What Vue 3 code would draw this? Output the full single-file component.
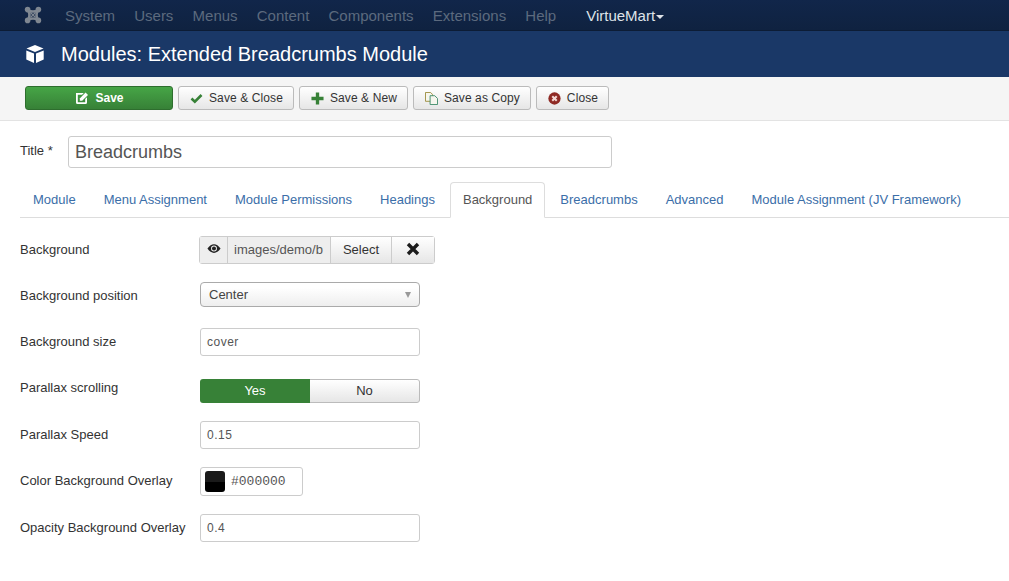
<script setup>
const navItems = ['System', 'Users', 'Menus', 'Content', 'Components', 'Extensions', 'Help']
const tabs = ['Module', 'Menu Assignment', 'Module Permissions', 'Headings', 'Background', 'Breadcrumbs', 'Advanced', 'Module Assignment (JV Framework)']
</script>

<template>
  <div class="page">
    <nav class="navbar">
      <svg class="logo" viewBox="0 0 18 18" width="18" height="18">
        <g fill="#7f8791">
          <circle cx="3.6" cy="3.6" r="2.8" />
          <circle cx="14.4" cy="3.6" r="2.8" />
          <circle cx="3.6" cy="14.4" r="2.8" />
          <circle cx="14.4" cy="14.4" r="2.8" />
        </g>
        <path fill="none" stroke="#7f8791" stroke-width="2.6" d="M4 4 Q9 7 14 4 Q11 9 14 14 Q9 11 4 14 Q7 9 4 4 Z" />
        <path fill="none" stroke="#7f8791" stroke-width="1.3" d="M6.5 6.5 L11.5 11.5 M11.5 6.5 L6.5 11.5" />
      </svg>
      <a v-for="item in navItems" :key="item" class="nav-link">{{ item }}</a>
      <a class="nav-link active">VirtueMart<span class="caret"></span></a>
    </nav>

    <header class="title-bar">
      <svg class="cube" viewBox="0 0 20 20" width="20" height="20">
        <path fill="#fff" d="M10 1 L18.5 4.6 L10 8 L1.5 4.6 Z" />
        <path fill="#fff" d="M1.3 6.4 L9 9.6 L9 19 L1.3 15.4 Z" />
        <path fill="#fff" d="M18.7 6.4 L11 9.6 L11 19 L18.7 15.4 Z" />
      </svg>
      <h1>Modules: Extended Breadcrumbs Module</h1>
    </header>

    <div class="toolbar">
      <button class="btn btn-save">
        <svg viewBox="0 0 14 14" width="14" height="14">
          <path fill="#fff" d="M1 2 H8.8 L7 3.8 H2.8 V11.2 H10.2 V8 L12 6.2 V11.5 Q12 13 10.5 13 H2.5 Q1 13 1 11.5 Z" />
          <path fill="#fff" d="M4.8 7.4 L10.6 1.6 L13 4 L7.2 9.8 H4.8 Z" />
        </svg>
        Save
      </button>
      <button class="btn">
        <svg viewBox="0 0 14 14" width="13" height="13">
          <path fill="none" stroke="#378137" stroke-width="2.8" d="M1.6 7 L5.2 10.4 L12.4 3.2" />
        </svg>
        Save &amp; Close
      </button>
      <button class="btn">
        <svg viewBox="0 0 14 14" width="13" height="13">
          <path fill="#378137" d="M5.2 0.5 H8.8 V5.2 H13.5 V8.8 H8.8 V13.5 H5.2 V8.8 H0.5 V5.2 H5.2 Z" />
        </svg>
        Save &amp; New
      </button>
      <button class="btn">
        <svg viewBox="0 0 14 14" width="13" height="13">
          <path fill="#f6f6ee" stroke="#9a8a3a" d="M0.5 0.5 H6 L8 2.5 V10 H0.5 Z" />
          <path fill="#f6f6ee" stroke="#3f8a6a" d="M5.5 4 H10.5 L13.5 7 V13.5 H5.5 Z" />
        </svg>
        Save as Copy
      </button>
      <button class="btn">
        <svg viewBox="0 0 14 14" width="13" height="13">
          <circle cx="7" cy="7" r="6.6" fill="#8f2a24" />
          <path stroke="#f4d9d6" stroke-width="2.2" d="M4.6 4.6 L9.4 9.4 M9.4 4.6 L4.6 9.4" />
        </svg>
        Close
      </button>
    </div>

    <main class="content">
      <div class="title-row">
        <label>Title *</label>
        <div class="title-input">Breadcrumbs</div>
      </div>

      <ul class="tabs">
        <li v-for="tab in tabs" :key="tab" :class="{ active: tab === 'Background' }">{{ tab }}</li>
      </ul>

      <div class="form">
        <div class="row">
          <label>Background</label>
          <div class="media">
            <span class="preview">
              <svg viewBox="0 0 16 12" width="14" height="11">
                <path fill="#222" fill-rule="evenodd" d="M0.5 6 Q4 1 8 1 Q12 1 15.5 6 Q12 11 8 11 Q4 11 0.5 6 Z M8 2.6 A3.4 3.4 0 1 0 8 9.4 A3.4 3.4 0 1 0 8 2.6 Z" />
                <circle cx="8" cy="6" r="2.3" fill="#222" />
              </svg>
            </span>
            <span class="path">images/demo/b</span>
            <span class="select-btn">Select</span>
            <span class="clear-btn">
              <svg viewBox="0 0 14 14" width="14" height="14">
                <path stroke="#1c1c1c" stroke-width="3.4" d="M2 2 L12 12 M12 2 L2 12" />
              </svg>
            </span>
          </div>
        </div>

        <div class="row">
          <label>Background position</label>
          <div class="dropdown">Center<span class="arrow"></span></div>
        </div>

        <div class="row row-size">
          <label>Background size</label>
          <div class="input">cover</div>
        </div>

        <div class="row row-switch">
          <label>Parallax scrolling</label>
          <div class="switch">
            <span class="yes">Yes</span>
            <span class="no">No</span>
          </div>
        </div>

        <div class="row">
          <label>Parallax Speed</label>
          <div class="input">0.15</div>
        </div>

        <div class="row">
          <label>Color Background Overlay</label>
          <div class="color">
            <span class="swatch"></span>
            <span class="hex">#000000</span>
          </div>
        </div>

        <div class="row">
          <label>Opacity Background Overlay</label>
          <div class="input">0.4</div>
        </div>
      </div>
    </main>
  </div>
</template>

<style>
html, body {
  margin: 0;
  background: #fff;
}
</style>

<style scoped>
.page {
  width: 1009px;
  height: 581px;
  overflow: hidden;
  font-family: "Liberation Sans", Arial, sans-serif;
  font-size: 13px;
  color: #333;
}

.navbar {
  height: 30px;
  background: linear-gradient(#11264a, #0f2240);
  border-bottom: 1px solid #0c1c35;
  display: flex;
  align-items: center;
  padding-left: 24px;
}

.logo {
  margin-right: 23px;
}

.nav-link {
  color: #5c6a7e;
  font-size: 15px;
  margin-right: 19.2px;
}

.nav-link.active {
  color: #dfe3e8;
  margin-left: 10.8px;
}

.caret {
  display: inline-block;
  margin-left: 1px;
  vertical-align: middle;
  border-top: 4px solid #dfe3e8;
  border-left: 4px solid transparent;
  border-right: 4px solid transparent;
}

.title-bar {
  height: 46px;
  background: #1a3867;
  display: flex;
  align-items: center;
  padding-left: 25px;
  box-sizing: border-box;
}

.title-bar h1 {
  margin: 0 0 0 16px;
  color: #fff;
  font-size: 20px;
  font-weight: 400;
}

.toolbar {
  height: 44px;
  box-sizing: border-box;
  background: #f5f5f5;
  border-bottom: 1px solid #e3e3e3;
  display: flex;
  align-items: center;
  padding: 0 0 1px 25px;
  gap: 5px;
}

.btn {
  height: 24px;
  padding: 0 10px 0 11px;
  display: flex;
  align-items: center;
  gap: 6px;
  font-family: inherit;
  font-size: 12px;
  letter-spacing: 0.1px;
  color: #333;
  background: linear-gradient(#fff, #e6e6e6);
  border: 1px solid #bbb;
  border-radius: 3px;
  box-sizing: border-box;
}

.btn-save {
  width: 148px;
  justify-content: center;
  color: #fff;
  font-weight: 700;
  letter-spacing: 0;
  background: linear-gradient(#46a546, #378137);
  border-color: #2e6e2e;
}

.content {
  padding: 15px 0 0 20px;
}

.title-row {
  display: flex;
  align-items: center;
  height: 32px;
}

.title-row label {
  width: 48px;
  font-size: 13px;
  margin-top: -4px;
}

.title-input {
  width: 544px;
  height: 32px;
  box-sizing: border-box;
  border: 1px solid #ccc;
  border-radius: 3px;
  padding: 0 6px;
  font-size: 18px;
  line-height: 30px;
  color: #555;
}

.tabs {
  list-style: none;
  display: flex;
  margin: 14px 0 0;
  padding: 0;
  height: 36px;
  box-sizing: border-box;
  border-bottom: 1px solid #ddd;
}

.tabs li {
  padding: 0 12px;
  margin-right: 2px;
  height: 36px;
  box-sizing: border-box;
  line-height: 34px;
  color: #3b6ea8;
  font-size: 13px;
  border: 1px solid transparent;
}

.tabs li.active {
  color: #555;
  background: #fff;
  border-color: #ddd #ddd #fff;
  border-radius: 4px 4px 0 0;
}

.form {
  padding-top: 18px;
}

.row {
  display: flex;
  align-items: flex-start;
  margin-bottom: 18px;
}

.row-size {
  margin-bottom: 23px;
}

.row label {
  width: 180px;
  flex: none;
  line-height: 28px;
}

.row-switch label {
  line-height: 18px;
}

.input {
  width: 220px;
  height: 28px;
  box-sizing: border-box;
  border: 1px solid #ccc;
  border-radius: 3px;
  padding: 0 6px;
  font-size: 12px;
  line-height: 27px;
  color: #555;
  letter-spacing: 0.5px;
}

.media {
  display: flex;
  height: 28px;
  box-sizing: border-box;
  border: 1px solid #ccc;
  border-radius: 3px;
  width: 236px;
  margin-left: -1px;
  line-height: 26px;
}

.preview {
  width: 28px;
  flex: none;
  background: #eee;
  border-right: 1px solid #ccc;
  display: flex;
  align-items: center;
  justify-content: center;
  padding-bottom: 3px;
  box-sizing: border-box;
}

.path {
  width: 103px;
  flex: none;
  padding-left: 6px;
  box-sizing: border-box;
  background: #eee;
  color: #555;
  border-right: 1px solid #ccc;
}

.select-btn {
  width: 61px;
  flex: none;
  text-align: center;
  background: linear-gradient(#fff, #e6e6e6);
  border-right: 1px solid #ccc;
  box-sizing: border-box;
}

.clear-btn {
  flex: 1;
  background: linear-gradient(#fff, #e6e6e6);
  display: flex;
  align-items: center;
  justify-content: center;
  padding-bottom: 3px;
}

.dropdown {
  position: relative;
  width: 220px;
  height: 25px;
  box-sizing: border-box;
  border: 1px solid #aaa;
  border-radius: 4px;
  padding-left: 8px;
  line-height: 23px;
  background: linear-gradient(#fff 20%, #eee);
  color: #444;
}

.arrow {
  position: absolute;
  right: 8px;
  top: 9px;
  border-top: 6px solid #999;
  border-left: 3.5px solid transparent;
  border-right: 3.5px solid transparent;
}

.switch {
  display: flex;
  width: 220px;
  height: 24px;
  line-height: 24px;
  text-align: center;
  border-radius: 3px;
  overflow: hidden;
}

.yes {
  width: 110px;
  background: #378137;
  color: #fff;
}

.no {
  flex: 1;
  box-sizing: border-box;
  background: linear-gradient(#fff, #e6e6e6);
  border: 1px solid #bbb;
  border-left: none;
  border-radius: 0 3px 3px 0;
  line-height: 22px;
}

.color {
  display: flex;
  align-items: center;
  width: 103px;
  height: 29px;
  box-sizing: border-box;
  border: 1px solid #ccc;
  border-radius: 3px;
  padding-left: 4px;
}

.swatch {
  width: 20px;
  height: 21px;
  border-radius: 3px;
  background: linear-gradient(#1a1a1a 50%, #000 50%);
}

.hex {
  margin-left: 6px;
  font-family: "Liberation Mono", monospace;
  font-size: 13px;
  color: #555;
}
</style>
